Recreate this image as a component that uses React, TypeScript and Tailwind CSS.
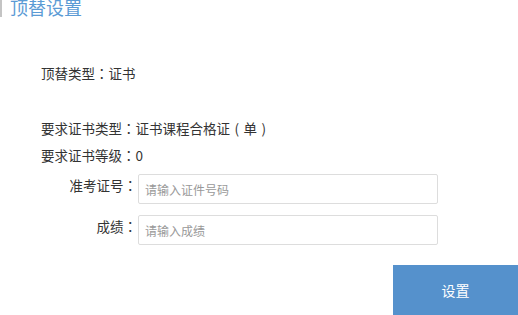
function P({ children }: { children: string }) {
  // centred full-width punctuation, as in the reference
  return <span className="font-['Noto_Sans_CJK_TC',sans-serif]">{children}</span>
}

export default function App() {
  return (
    <div className="w-[518px] h-[315px] overflow-hidden bg-white text-[#333] font-['Noto_Sans_CJK_SC','Noto_Sans',sans-serif]">
      {/* Title */}
      <div className="flex items-start h-[18px]">
        <div className="w-[2px] h-[17px] bg-[#c4c4c4]" />
        <div className="pl-[8px] text-[18px] leading-[18px] -mt-[2px] text-[#5b9bd5]">顶替设置</div>
      </div>

      <div className="pl-[41px] text-[13.5px]">
        <div className="mt-[45px] leading-[20px]">
          顶替类型<P>：</P>证书
        </div>
        <div className="mt-[35px] leading-[20px]">
          要求证书类型<P>：</P>证书课程合格证<span className="px-[4.5px]">(</span>单
          <span className="px-[4.5px]">)</span>
        </div>
        <div className="mt-[7px] leading-[20px]">
          要求证书等级<P>：</P>0
        </div>
      </div>

      <div className="flex flex-col gap-[11px] mt-[9px]">
        <FormRow label="准考证号" placeholder="请输入证件号码" />
        <FormRow label="成绩" placeholder="请输入成绩" />
      </div>

      <div className="flex justify-end mt-[20px]">
        <button className="w-[125px] h-[50px] bg-[#5591cc] text-white text-[14px]">设置</button>
      </div>
    </div>
  )
}

function FormRow({ label, placeholder }: { label: string; placeholder: string }) {
  return (
    <div className="flex items-start">
      <label className="w-[138px] text-right text-[13.5px] leading-[20px] pt-[1px] pr-[1px]">
        {label}
        <P>：</P>
      </label>
      <input
        className="w-[300px] h-[30px] border border-[#ddd] rounded-[2px] px-[6px] text-[12px] placeholder:text-[#999] outline-none"
        placeholder={placeholder}
      />
    </div>
  )
}
